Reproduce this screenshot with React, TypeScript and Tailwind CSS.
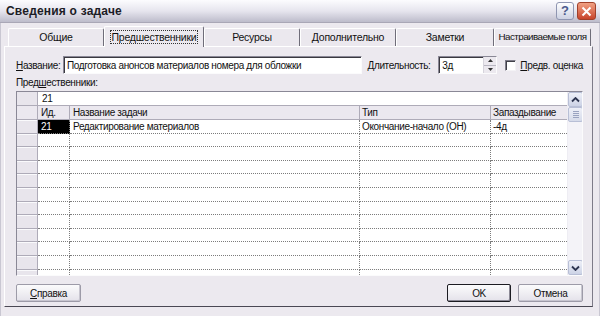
import React from "react";

const tabs = [
  { label: "Общие", w: "w-[96px]" },
  { label: "Предшественники", w: "w-[100px]", active: true },
  { label: "Ресурсы", w: "w-[96px]" },
  { label: "Дополнительно", w: "w-[96px]" },
  { label: "Заметки", w: "w-[98px]" },
  { label: "Настраиваемые поля", w: "w-[97px]", tight: true },
];

const rows = [
  { id: "21", name: "Редактирование материалов", type: "Окончание-начало (ОН)", lag: "-4д" },
  ...Array.from({ length: 11 }, () => ({ id: "", name: "", type: "", lag: "" })),
];

function Chevron({ down }: { down?: boolean }) {
  return (
    <svg width="9" height="6" viewBox="0 0 9 6">
      <path
        d={down ? "M1 1.5 L4.5 5 L8 1.5" : "M1 4.5 L4.5 1 L8 4.5"}
        fill="none"
        stroke="#2d3550"
        strokeWidth="1.8"
      />
    </svg>
  );
}

function ScrollBtn({ down }: { down?: boolean }) {
  return (
    <div className="h-[15px] w-[15px] rounded-[2px] border border-[#b8bfd6] bg-gradient-to-b from-[#eef0f8] to-[#cdd3e6] flex items-center justify-center">
      <Chevron down={down} />
    </div>
  );
}

function Btn({ children, def, w }: { children: React.ReactNode; def?: boolean; w: string }) {
  return (
    <div
      className={`${w} h-[18px] rounded-[2px] flex items-center justify-center bg-gradient-to-b from-[#fbfbfc] to-[#e4e2ea] ${
        def ? "border border-[#1c1c22] shadow-[inset_-1px_-1px_0_#8c8a96]" : "border border-[#9d9ba8] shadow-[inset_-1px_-1px_0_#c8c6d0]"
      }`}
    >
      {children}
    </div>
  );
}

export default function App() {
  return (
    <div className="w-[600px] h-[316px] flex flex-col bg-[#ece9ef] overflow-hidden whitespace-nowrap font-['Liberation_Sans',Arial,sans-serif] text-[10px] tracking-[-0.35px] text-[#111]">
      {/* title bar */}
      <div className="h-[23px] shrink-0 flex items-center justify-between pl-[6px] pr-[4px] bg-gradient-to-b from-[#fcfcfe] via-[#e6e5ee] to-[#bdbccb] border-b border-[#a9a7b6]">
        <span className="text-[12px] font-bold tracking-[0.2px] text-[#1c1c26]">Сведения о задаче</span>
        <div className="flex gap-[3px]">
          <div className="w-[18px] h-[18px] rounded-[3px] border border-[#8f96b1] bg-gradient-to-b from-[#ffffff] to-[#cdd2e3] flex items-center justify-center text-[13px] font-bold tracking-normal text-[#4b5a8c]">
            ?
          </div>
          <div className="w-[19px] h-[18px] rounded-[3px] border border-[#a0402a] bg-gradient-to-b from-[#f0a083] to-[#c7432a] flex items-center justify-center">
            <svg width="11" height="11" viewBox="0 0 11 11">
              <path d="M1.5 1.5 L9.5 9.5 M9.5 1.5 L1.5 9.5" stroke="#fff" strokeWidth="2" />
            </svg>
          </div>
        </div>
      </div>

      {/* body */}
      <div className="flex-1 flex flex-col pl-[3px] pr-[6px] pt-[3px] pb-[9px] border-l border-r border-[#c9c7d2]">
        {/* tabs */}
        <div className="flex items-end h-[20px] pl-[4px]">
          {tabs.map((t) =>
            t.active ? (
              <div
                key={t.label}
                className={`${t.w} h-[21px] -mb-px z-10 bg-[#ece9ef] border-t border-l border-white border-r border-r-[#6f6d79] rounded-t-[2px] flex items-center justify-center text-[10.5px] tracking-[-0.25px]`}
              >
                <span className="outline outline-1 outline-dotted outline-[#333] px-[1px] leading-[12px]">{t.label}</span>
              </div>
            ) : (
              <div
                key={t.label}
                className={`${t.w} h-[18px] overflow-hidden bg-[#ebe8ee] border-t border-l border-white border-r border-r-[#6f6d79] rounded-t-[2px] flex items-center justify-center ${
                  t.tight ? "text-[9.8px] tracking-[-0.55px]" : "text-[10.5px] tracking-[-0.25px]"
                }`}
              >
                {t.label}
              </div>
            )
          )}
        </div>

        {/* panel */}
        <div className="flex-1 flex flex-col border-t border-l border-white border-r border-r-[#7d7b88] border-b border-b-[#4a4854] pl-[11px] pr-[9px] pt-[9px] pb-[4px]">
          {/* name row */}
          <div className="flex items-center h-[18px]">
            <span className="w-[47px]">
              <span className="underline">Н</span>азвание:
            </span>
            <div className="w-[300px] h-[18px] border border-[#8a8896] border-b-[#fbfbfc] border-r-[#fbfbfc] shadow-[inset_1px_1px_0_#3a3940] bg-white flex items-center pl-[3px]">
              Подготовка анонсов материалов номера для обложки
            </div>
            <span className="ml-[5px] w-[71px]">
              <span className="underline">Д</span>лительность:
            </span>
            <div className="flex h-[18px] border border-[#8a8896] border-b-[#fbfbfc] border-r-[#fbfbfc] shadow-[inset_1px_1px_0_#3a3940] bg-white">
              <div className="w-[44px] flex items-center pl-[3px]">3д</div>
              <div className="w-[13px] flex flex-col bg-[#ece9ef] border-l border-[#d6d4dc]">
                <div className="flex-1 flex items-center justify-center border-b border-[#b9b7c2]">
                  <svg width="5" height="3" viewBox="0 0 5 3"><path d="M0 3 L2.5 0 L5 3Z" fill="#333" /></svg>
                </div>
                <div className="flex-1 flex items-center justify-center">
                  <svg width="5" height="3" viewBox="0 0 5 3"><path d="M0 0 L2.5 3 L5 0Z" fill="#333" /></svg>
                </div>
              </div>
            </div>
            <div className="ml-[8px] w-[11px] h-[11px] bg-white border border-[#7f7d8a] border-b-[#f4f3f6] border-r-[#f4f3f6] shadow-[inset_1px_1px_0_#404048]" />
            <span className="ml-[4px]">
              <span className="underline">П</span>редв. оценка
            </span>
          </div>

          <div className="mt-[3px] h-[12px] leading-[12px]">
            Пред<span className="underline">ш</span>ественники:
          </div>

          {/* grid */}
          <div className="mt-[2px] h-[185px] flex border border-[#8a8896] border-b-[#fbfbfc] border-r-[#fbfbfc] bg-white overflow-hidden">
            <div className="flex-1 flex flex-col">
              {/* edit bar */}
              <div className="flex h-[14px] shrink-0">
                <div className="w-[21px] bg-[#e8e5ec] border-r border-b border-[#aeabb8]" />
                <div className="flex-1 flex items-center pl-[4px] border-b border-[#aeabb8]">21</div>
              </div>
              {/* header */}
              <div className="flex h-[14px] shrink-0 bg-[#ebe8ef]">
                <div className="w-[21px] border-r border-b border-[#aeabb8]" />
                <div className="w-[32px] border-r border-b border-[#aeabb8] pl-[3px] flex items-center">Ид.</div>
                <div className="w-[290px] border-r border-b border-[#aeabb8] pl-[3px] flex items-center">Название задачи</div>
                <div className="w-[131px] border-r border-b border-[#aeabb8] pl-[2px] flex items-center">Тип</div>
                <div className="flex-1 border-b border-[#aeabb8] pl-[2px] flex items-center">Запаздывание</div>
              </div>
              {rows.map((r, i) => (
                <div key={i} className="flex h-[13.6px] shrink-0">
                  <div className="w-[21px] bg-[#e8e5ec] border-r border-b border-[#aeabb8] shadow-[inset_0_1px_0_#fafafc]" />
                  <div
                    className={`w-[32px] pl-[3px] flex items-center border-r border-b border-dotted border-[#7c7c7c] ${
                      i === 0 ? "bg-black text-white" : ""
                    }`}
                  >
                    {r.id}
                  </div>
                  <div className="w-[290px] pl-[3px] flex items-center border-r border-b border-dotted border-[#7c7c7c]">{r.name}</div>
                  <div className="w-[131px] pl-[2px] flex items-center border-r border-b border-dotted border-[#7c7c7c]">{r.type}</div>
                  <div className="flex-1 pl-[2px] flex items-center border-b border-dotted border-[#7c7c7c]">{r.lag}</div>
                </div>
              ))}
            </div>
            {/* scrollbar */}
            <div className="w-[15px] flex flex-col bg-[#f4f3f8] border-l border-[#eeedf3]">
              <ScrollBtn />
              <div className="h-[15px] w-[15px] rounded-[2px] border border-[#b8bfd6] bg-gradient-to-b from-[#eef0f8] to-[#d6dbea] flex flex-col items-center justify-center gap-[1px]">
                <div className="w-[6px] h-px bg-[#9aa3c0]" />
                <div className="w-[6px] h-px bg-[#9aa3c0]" />
                <div className="w-[6px] h-px bg-[#9aa3c0]" />
                <div className="w-[6px] h-px bg-[#9aa3c0]" />
              </div>
              <div className="flex-1" />
              <ScrollBtn down />
            </div>
          </div>

          {/* buttons */}
          <div className="mt-auto flex items-center justify-between">
            <Btn w="w-[65px]">
              <span>
                <span className="underline">С</span>правка
              </span>
            </Btn>
            <div className="flex gap-[7px]">
              <Btn w="w-[64px]" def>
                OK
              </Btn>
              <Btn w="w-[65px]">Отмена</Btn>
            </div>
          </div>
        </div>
      </div>
    </div>
  );
}
